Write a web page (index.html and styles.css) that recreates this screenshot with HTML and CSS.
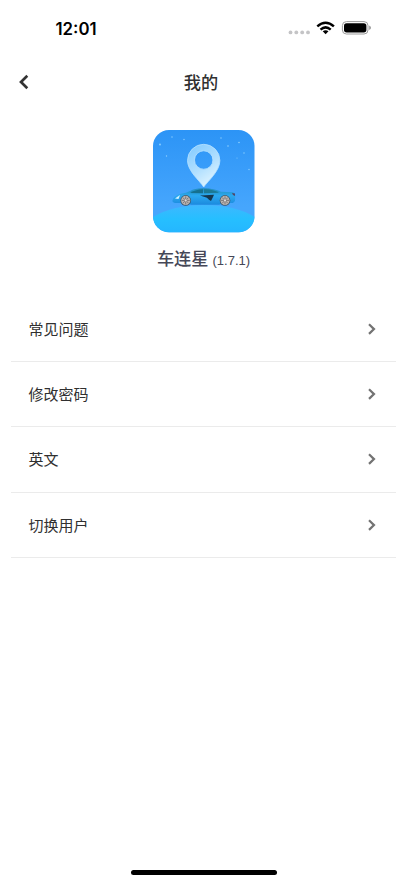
FILE: index.html
```html
<!DOCTYPE html>
<html lang="zh-CN">
<head>
<meta charset="utf-8">
<title>我的</title>
<link rel="stylesheet" href="styles.css">
</head>
<body>
<div class="screen">
  <div class="status">
    <span class="time">12:01</span>
    <svg class="indicators" width="86" height="18" viewBox="0 0 86 18">
      <g fill="#c4c4c6"><circle cx="4.5" cy="13.4" r="1.9"/><circle cx="10.3" cy="13.4" r="1.9"/><circle cx="16.2" cy="13.4" r="1.9"/><circle cx="22" cy="13.4" r="1.9"/></g>
      <g fill="none" stroke="#000" stroke-width="2.5"><path d="M31.3 7.4Q39.6 .2 47.9 7.4"/><path d="M34.5 10.6Q39.6 6.2 44.7 10.6"/></g>
      <path d="M36.7 12.3Q39.6 10.2 42.5 12.3L39.6 15.2Z"/>
      <rect x="56.4" y="2.6" width="25.6" height="12.4" rx="4" fill="#fff" stroke="#9b9b9b"/>
      <rect x="58" y="4.2" width="22.4" height="9.2" rx="2.6"/>
      <path d="M83.2 6.6Q85 7.4 85 8.8T83.2 11Z" fill="#999"/>
    </svg>
  </div>
  <header class="nav">
    <svg class="back" width="12" height="16" viewBox="0 0 12 16"><path d="M9.3 1.8 3 8l6.3 6.2"/></svg>
    <h1>我的</h1>
  </header>
  <section class="about">
    <svg class="logo" width="102" height="103" viewBox="0 0 102 103">
      <defs>
        <linearGradient id="sky" x2="0" y2="1"><stop stop-color="#2c94f6"/><stop offset=".75" stop-color="#46a6fd"/></linearGradient>
        <linearGradient id="ground" x2="0" y2="1"><stop stop-color="#3eb8fe"/><stop offset=".5" stop-color="#26bfff"/><stop offset="1" stop-color="#25b6ff"/></linearGradient>
        <linearGradient id="pin" x1=".2" x2=".7" y2="1"><stop stop-color="#86ccff"/><stop offset=".55" stop-color="#b2e0ff"/><stop offset="1" stop-color="#e4f6ff"/></linearGradient>
        <linearGradient id="paint" x2="0" y2="1"><stop stop-color="#218bb8"/><stop offset=".45" stop-color="#2ba9f0"/><stop offset="1" stop-color="#1b8ade"/></linearGradient>
        <clipPath id="tile"><rect width="101.5" height="102.3" rx="16"/></clipPath>
        <g id="wheel"><circle r="5.3" fill="#3b5566"/><circle r="4.6" fill="#b8b3b0"/><path d="M0-4V4M-4 0H4M-2.9-2.9 2.9 2.9M-2.9 2.9 2.9-2.9" stroke="#6e686a" stroke-width=".8"/><circle r="1.1" fill="#ddd"/></g>
      </defs>
      <g clip-path="url(#tile)">
        <rect width="102" height="103" fill="url(#sky)"/>
        <path d="M0 87Q20 75 51 75T102 87V103H0Z" fill="url(#ground)"/>
        <g fill="#8ed0ff"><circle cx="7" cy="14.5" r=".9"/><circle cx="19" cy="7" r=".7"/><circle cx="31" cy="9.5" r=".7"/><circle cx="13.5" cy="26" r=".7"/><circle cx="68" cy="8" r=".7"/><circle cx="75" cy="16" r=".8"/><circle cx="86" cy="12.5" r=".8"/><circle cx="91" cy="23" r=".7"/><circle cx="96" cy="39.5" r=".7"/><circle cx="84" cy="28" r=".5"/></g>
        <path fill="url(#pin)" stroke="#b9e2ff" stroke-width=".8" fill-rule="evenodd" d="M50.7 57C47 51 34.5 41 34.5 30.5A16.2 16.2 0 0 1 66.9 30.5C66.9 41 55 51 50.7 57ZM50.7 20.8A9.2 9.2 0 1 0 50.7 39.2A9.2 9.2 0 1 0 50.7 20.8Z"/>
        <path fill="url(#paint)" d="M19.5 70.5Q20 66 27 64Q34 62.8 37 61Q42 58 51 58.2Q61 58.2 68 61.7L80 62.2L82.3 64L82 71L80 73H72L66 74.8H38L34 73L22 73Q19 72 19.5 70.5Z"/>
        <path d="M37 63Q43 59.3 50 59.3V63.3Z" fill="#15708f"/>
        <path d="M51 59.3Q60 59 66 62.8L51 63.2Z" fill="#1b7a96"/>
        <path d="M47 65.4 61 64.8 60 67 58 71Q56 70 54 67.8Z" fill="#15374e"/>
        <path d="M22 68.5 27 65 25.5 69Z" fill="#d3f4ff"/>
        <path d="m79 63 3 .4v2.5l-2-.8z" fill="#554668"/>
        <use href="#wheel" x="32.7" y="70.4"/><use href="#wheel" x="72" y="70.4"/>
      </g>
    </svg>
    <p class="app"><b>车连星</b><span>(1.7.1)</span></p>
  </section>
  <ul class="menu">
    <li><span>常见问题</span><svg width="10" height="14" viewBox="0 0 10 14"><path d="m2 2.3 5 4.8-5 4.8"/></svg></li>
    <li><span>修改密码</span><svg width="10" height="14" viewBox="0 0 10 14"><path d="m2 2.3 5 4.8-5 4.8"/></svg></li>
    <li><span>英文</span><svg width="10" height="14" viewBox="0 0 10 14"><path d="m2 2.3 5 4.8-5 4.8"/></svg></li>
    <li><span>切换用户</span><svg width="10" height="14" viewBox="0 0 10 14"><path d="m2 2.3 5 4.8-5 4.8"/></svg></li>
  </ul>
  <div class="home"></div>
</div>
</body>
</html>
```
FILE: styles.css
```css
* { box-sizing: border-box; }
body { margin: 0; background: #fff; font-family: "Noto Sans CJK SC", sans-serif; }
.screen { height: 883px; display: flex; flex-direction: column; overflow: hidden; }
.status { height: 56px; display: flex; justify-content: space-between; align-items: center; padding: 0 35px 0 55.5px; }
.time { font: 600 16.8px/20px Inter, sans-serif; color: #000; padding-top: 1px; }
.indicators { display: block; }
.nav { height: 52px; display: grid; grid-template-columns: 48px 1fr 53px; align-items: center; }
.back { margin-left: 17.5px; fill: none; stroke: #333; stroke-width: 2.7; }
.nav h1 { margin: 0; text-align: center; font-size: 17.2px; line-height: 24px; font-weight: 500; color: #303030; }
.about { height: 189px; padding-top: 21.5px; display: flex; flex-direction: column; align-items: center; }
.logo { display: block; flex: none; }
.app { margin: 12px 0 0; display: flex; align-items: baseline; gap: 4px; line-height: 25px; color: #454757; }
.app b { font-size: 17.2px; font-weight: 500; }
.app span { font: 13px/25px "Liberation Sans", sans-serif; }
.menu { margin: 0 11px; padding: 0; list-style: none; }
.menu li { height: 65.2px; padding: 0 19px 0 17.5px; display: flex; align-items: center; justify-content: space-between; border-bottom: 1px solid #ebebeb; font-size: 15px; line-height: 22px; color: #303030; }
.menu svg { fill: none; stroke: #737373; stroke-width: 2.2; }
.home { width: 146px; height: 5px; margin: auto auto 8px; border-radius: 3px; background: #000; }
```
